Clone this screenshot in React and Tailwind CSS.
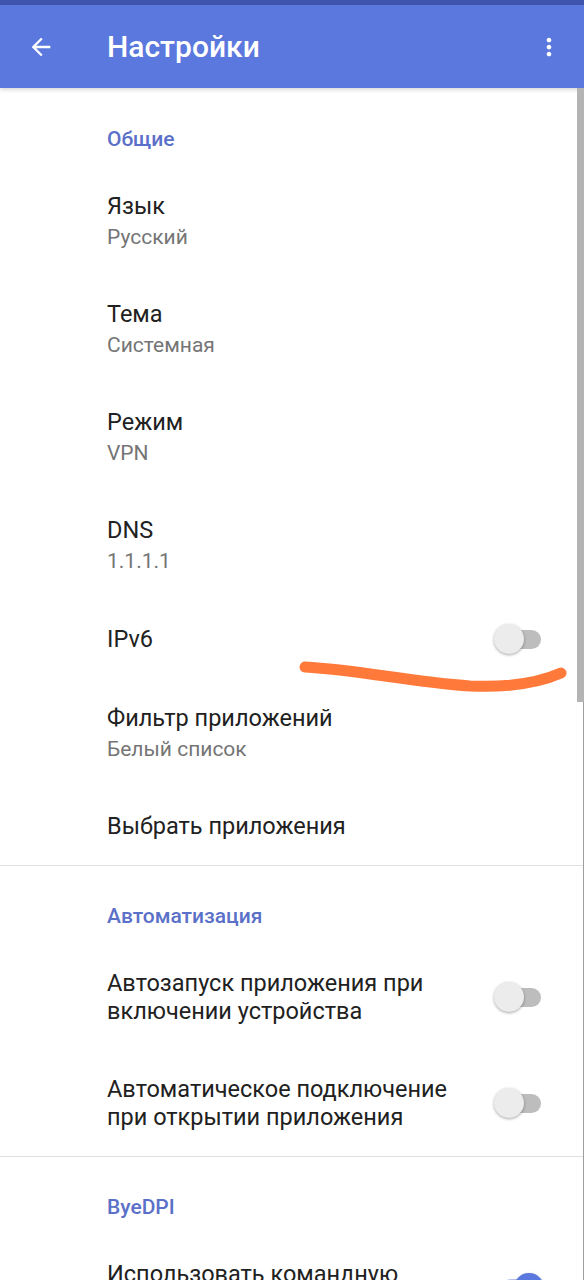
import React from 'react'

const Toggle = ({ on = false }) => {
  return (
    <div className="relative w-[50px] h-[30px] shrink-0 flex items-center">
      <div className={`absolute left-[8px] right-[3px] h-[19px] rounded-full ${on ? 'bg-[#b3c0f0]' : 'bg-[#bdbdbd]'}`} />
      <div
        className={`absolute top-0 w-[30px] h-[30px] rounded-full shadow-[0_1px_3px_rgba(0,0,0,0.35)] ${
          on ? 'right-0 bg-[#5a78dd]' : 'left-0 bg-[#ececec]'
        }`}
      />
    </div>
  )
}

const Category = ({ title, top = 'pt-[36px]' }) => (
  <div className={`pl-[107px] pb-[14px] ${top}`}>
    <p className="text-[21px] leading-[28px] font-medium text-[#5b70c8]">{title}</p>
  </div>
)

const Item = ({ title, summary, toggle, on }) => (
  <div className="flex items-center pl-[107px] pr-[40px] py-[25px]">
    <div className="flex-1 pr-[30px]">
      <p className="text-[23.5px] leading-[28px] text-[#212121]">{title}</p>
      {summary && <p className="mt-[4px] text-[21px] leading-[26px] text-[#757575]">{summary}</p>}
    </div>
    {toggle && <Toggle on={on} />}
  </div>
)

export default function App() {
  return (
    <div
      className="relative w-[584px] h-[1280px] overflow-hidden bg-white"
      style={{ fontFamily: 'Roboto, "Noto Sans", sans-serif' }}
    >
      {/* Status strip + app bar */}
      <div className="h-[5px] bg-[#3f55ad]" />
      <div className="h-[83px] bg-[#5a78dd] flex items-center shadow-[0_2px_4px_rgba(0,0,0,0.15)]">
        <div className="w-[107px] flex items-center pl-[27px]">
          <svg width="28" height="28" viewBox="0 0 24 24" fill="#ffffff">
            <path d="M20 11H7.83l5.59-5.59L12 4l-8 8 8 8 1.41-1.41L7.83 13H20v-2z" />
          </svg>
        </div>
        <h1 className="flex-1 text-[30px] font-medium text-white leading-none">Настройки</h1>
        <div className="pr-[21px]">
          <svg width="28" height="30" viewBox="0 0 24 24" fill="#ffffff">
            <path d="M12 8c1.1 0 2-.9 2-2s-.9-2-2-2-2 .9-2 2 .9 2 2 2zm0 2c-1.1 0-2 .9-2 2s.9 2 2 2 2-.9 2-2-.9-2-2-2zm0 6c-1.1 0-2 .9-2 2s.9 2 2 2 2-.9 2-2-.9-2-2-2z" />
          </svg>
        </div>
      </div>

      {/* List */}
      <div>
        <Category title="Общие" top="pt-[37px]" />
        <Item title="Язык" summary="Русский" />
        <Item title="Тема" summary="Системная" />
        <Item title="Режим" summary="VPN" />
        <Item title="DNS" summary="1.1.1.1" />
        <Item title="IPv6" toggle />
        <Item title="Фильтр приложений" summary="Белый список" />
        <Item title="Выбрать приложения" />
        <div className="h-px bg-[#e0e0e0]" />

        <Category title="Автоматизация" />
        <Item title="Автозапуск приложения при включении устройства" toggle />
        <Item title="Автоматическое подключение при открытии приложения" toggle />
        <div className="h-px bg-[#e0e0e0]" />

        <Category title="ByeDPI" />
        <Item title="Использовать командную строку" toggle on />
      </div>

      {/* scrollbar */}
      <div className="absolute right-0 top-[88px] w-[7px] h-[614px] bg-[#b4b4b4]" />
      <div className="absolute right-0 top-[702px] bottom-0 w-px bg-[#9e9e9e]" />

      {/* hand-drawn annotation */}
      <svg className="absolute left-0 top-0 pointer-events-none" width="584" height="1280">
        <path
          d="M305 667 C 360 670, 410 682, 470 686 C 515 688, 545 680, 561 673"
          stroke="#ff7a3a"
          strokeWidth="11"
          strokeLinecap="round"
          fill="none"
        />
      </svg>
    </div>
  )
}
